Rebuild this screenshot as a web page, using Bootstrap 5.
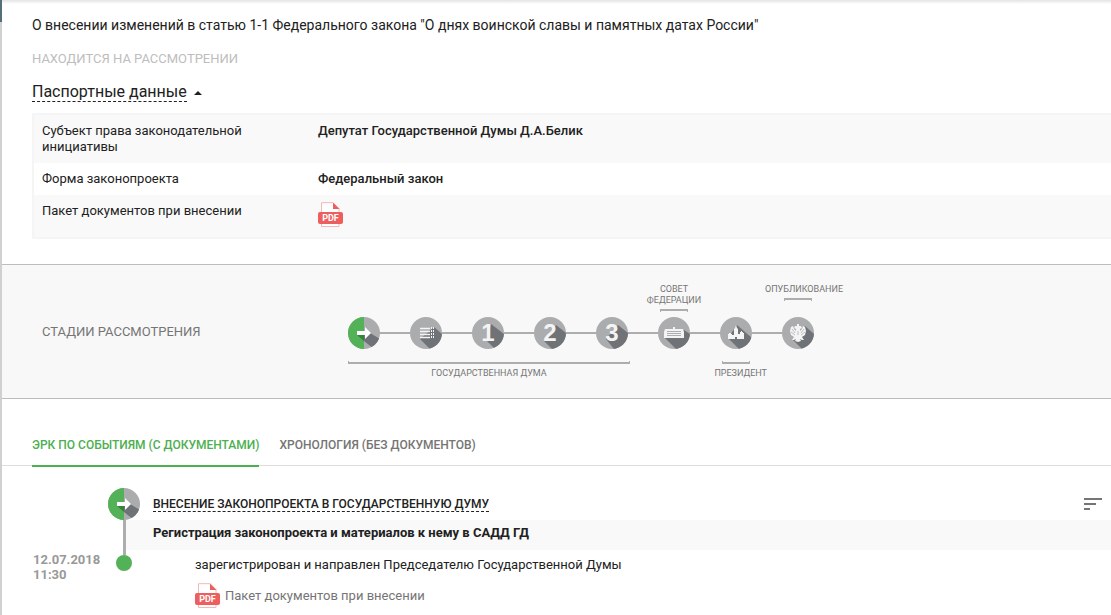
<!DOCTYPE html>
<html lang="ru">
<head>
<meta charset="utf-8">
<meta name="viewport" content="width=device-width, initial-scale=1">
<title>Законопроект</title>
<link href="https://cdn.jsdelivr.net/npm/bootstrap@5.3.0/dist/css/bootstrap.min.css" rel="stylesheet">
<style>
body{font-family:Roboto,"Liberation Sans",sans-serif;font-size:13px;line-height:16px;color:#212121;background:#fff;overflow-x:hidden}
a{color:inherit;text-decoration:none}
.side-rail{width:2px;background:linear-gradient(#546e7a 22px,#d0d0d0 22px)}
.top-shade{height:4px;background:linear-gradient(#e4e4e4,#fff)}
.page-main{min-width:0}
.bill-head{padding:12px 0 25px 30px}
.bill-title{font-size:14px;line-height:18px;font-weight:400;margin:0 0 17px}
.bill-status{color:#bdbdbd;line-height:16px;margin:0 0 16px}
.passport-toggle{font-size:16px;line-height:18px;gap:7px;color:#212121;margin-bottom:11px}
.dashed{border-bottom:1px dashed #212121}
.caret-up{border:4px solid transparent;border-top:0;border-bottom-color:#212121}
.passport{border:2px solid #f5f5f5;border-right:0;border-radius:2px 0 0 2px}
.passport table{margin:0;width:100%}
.passport th,.passport td{padding:8px;vertical-align:top}
.passport th{width:276px;font-weight:400;padding-right:60px}
.passport td{font-weight:500}
.passport tr:nth-child(odd){background:#f9f9f9}
.passport td.file-cell{padding:7px 8px 10px}
.passport td svg,.doc-link svg{display:block}
.stages{background:#f8f8f8;border-top:1px solid #bdbdbd;border-bottom:1px solid #bdbdbd;padding:19px 0 19px 40px}
.stages-title{width:291px;color:#757575;font-size:13px;font-weight:400;margin:0}
.stage-grid{display:grid;grid-template-columns:repeat(8,62px) 14px;grid-template-rows:28px auto auto;row-gap:5px;font-size:9px;line-height:11px;color:#757575;text-align:center}
.stage-dot{grid-row:2;display:flex;align-items:center;height:32px}
.stage-dot::before,.stage-dot::after{content:"";flex:1;height:2px;background:#adadad}
.stage-dot:nth-child(1)::before,.stage-dot:nth-child(8)::after{background:none}
.up,.down{display:flex;flex-direction:column;white-space:nowrap;gap:3px}
.up{grid-row:1}
.down{grid-row:3;padding-top:7px;gap:4px}
.s6{grid-column:6}.s7{grid-column:7}.s8{grid-column:8/10}.s15{grid-column:1/6;padding-left:15px;padding-right:13px}
.clamp{height:3px;border:1px solid #adadad}
.up .clamp{border-top-width:2px;border-bottom:0}
.down .clamp{border-bottom-width:2px;border-top:0}
.short{width:28px;margin-left:17px}
.event-tabs{padding:26px 0 0 30px;gap:20px;border-bottom:1px solid #dedede}
.event-tabs button{font-size:12px;border:0;background:none;padding:12px 0 12px;font-weight:500;color:#757575;border-bottom:2px solid transparent;margin-bottom:-2px}
.event-tabs button.active{color:#4caf50;border-color:#4caf50}
.timeline{display:grid;grid-template-columns:75px 32px minmax(0,1fr);grid-template-rows:32px 30px auto;padding:22px 0 0 31px}
.rail{grid-column:2;grid-row:1/4;display:flex;flex-direction:column;align-items:center;z-index:1}
.rail-line{width:3px;height:35px;background:#adadad}
.rail-dot{width:16px;height:16px;border-radius:50%;background:#53b257}
.ev-head{grid-column:3;grid-row:1;padding:0 9px 0 13px}
.ev-name{grid-column:2/4;grid-row:2;margin-left:16px;background:#f9f9f9;padding:5px 13px 9px 29px;font-weight:700}
.ev-date{grid-column:1;grid-row:3;color:#999;font-weight:700;line-height:15px;padding-top:2px}
.ev-body{grid-column:3;grid-row:3;padding:7px 0 8px 55px}
.ev-caption{font-size:12px;font-weight:500;line-height:14px;margin:0}
.doc-link{color:#757575;gap:5px;margin-top:10px}
</style>
</head>
<body>
<svg width="0" height="0" class="position-absolute" aria-hidden="true">
<defs>
<clipPath id="disc"><circle cx="16" cy="16" r="16"/></clipPath>
<symbol id="pdf" viewBox="0 0 25 25"><path d="M3.500 24.500V.7H15l6 6V24.500z" fill="#fff" stroke="#f4b8b6"/><path d="M15 .5 21.500 7H15z" fill="#ed5e5e"/><rect y="10" width="25" height="12" rx="2" fill="#ed5e5e"/><text x="12.500" y="19" text-anchor="middle" font-family="Roboto,sans-serif" font-weight="700" font-size="9" fill="#fff">PDF</text></symbol>
<symbol id="enter" viewBox="0 0 32 32"><g clip-path="url(#disc)"><path d="M0 0h32v32H0z" fill="#abacae"/><path d="M0 0h16v32H0z" fill="#53b257"/><path d="M9 18h7v6z" fill="#39813d"/><path d="M16 18l6-2 10 6v10h-6l-10-8z" fill="#6f7277"/><path d="M9 14h8v-4l6 6-6 6v-4H9z" fill="#fff"/></g></symbol>
</defs>
</svg>
<div class="d-flex min-vh-100">
<div class="side-rail flex-shrink-0"></div>
<main class="page-main flex-grow-1">
<div class="top-shade"></div>
<section class="bill-head">
<h1 class="bill-title">О внесении изменений в статью 1-1 Федерального закона "О днях воинской славы и памятных датах России"</h1>
<p class="bill-status">НАХОДИТСЯ НА РАССМОТРЕНИИ</p>
<button type="button" class="passport-toggle d-flex align-items-center border-0 bg-transparent p-0" aria-expanded="true"><span class="dashed">Паспортные данные</span><span class="caret-up"></span></button>
<div class="passport"><table>
<tbody>
<tr><th scope="row">Субъект права законодательной инициативы</th><td>Депутат Государственной Думы Д.А.Белик</td></tr>
<tr><th scope="row">Форма законопроекта</th><td>Федеральный закон</td></tr>
<tr><th scope="row">Пакет документов при внесении</th><td class="file-cell"><a href="#" aria-label="PDF"><svg width="25" height="25"><use href="#pdf"/></svg></a></td></tr>
</tbody></table></div>
</section>
<section class="stages d-flex align-items-center">
<h2 class="stages-title flex-shrink-0">СТАДИИ РАССМОТРЕНИЯ</h2>
<div class="stage-grid">
<div class="stage-dot"><svg width="32" height="32"><use href="#enter"/></svg></div>
<div class="stage-dot"><svg width="32" height="32" viewBox="0 0 32 32"><g clip-path="url(#disc)"><path d="M0 0h32v32H0z" fill="#abacae"/><path d="M24 10l8 7v15H20L10 22z" fill="#6f7277"/><path d="M10 11.500h10M10 14.500h10M10 17.500h10M10 20.500h10" stroke="#f4f4f4" stroke-width="1.600"/><path d="M21.500 10v12M23.500 10v12" stroke="#f4f4f4" stroke-dasharray="2 1"/></g></svg></div>
<div class="stage-dot"><svg width="32" height="32" viewBox="0 0 32 32"><g clip-path="url(#disc)"><path d="M0 0h32v32H0z" fill="#abacae"/><path d="M19 7l13 10v15h-9l-8-8z" fill="#6f7277"/><text x="16" y="24" text-anchor="middle" font-family="Liberation Sans,sans-serif" font-weight="700" font-size="24" fill="#f4f4f4">1</text></g></svg></div>
<div class="stage-dot"><svg width="32" height="32" viewBox="0 0 32 32"><g clip-path="url(#disc)"><path d="M0 0h32v32H0z" fill="#abacae"/><path d="M22 8l10 8v16H18l-8-8z" fill="#6f7277"/><text x="16" y="24" text-anchor="middle" font-family="Liberation Sans,sans-serif" font-weight="700" font-size="24" fill="#f4f4f4">2</text></g></svg></div>
<div class="stage-dot"><svg width="32" height="32" viewBox="0 0 32 32"><g clip-path="url(#disc)"><path d="M0 0h32v32H0z" fill="#abacae"/><path d="M22 8l10 8v16H18l-8-10z" fill="#6f7277"/><text x="16" y="24" text-anchor="middle" font-family="Liberation Sans,sans-serif" font-weight="700" font-size="24" fill="#f4f4f4">3</text></g></svg></div>
<div class="stage-dot"><svg width="32" height="32" viewBox="0 0 32 32"><g clip-path="url(#disc)"><path d="M0 0h32v32H0z" fill="#abacae"/><path d="M26 13l6 4v15H18L7 21z" fill="#6f7277"/><path d="M7 12h8v-2h2v2h8l1 3v6H6v-6z" fill="#f4f4f4"/><path d="M9 14.500h14M9 16.500h14M9 18.500h14" stroke="#999ba0" stroke-width=".8"/></g></svg></div>
<div class="stage-dot"><svg width="32" height="32" viewBox="0 0 32 32"><g clip-path="url(#disc)"><path d="M0 0h32v32H0z" fill="#abacae"/><path d="M17 8l15 13v11H19L8 21z" fill="#6f7277"/><path d="M8 22v-5h1v-1h2v1h1v1h2v-6l1-1 1-3 1 3 1 1v5h2v-2h1v-1h1v1h1v1h1v6h-7v-2h-2v2z" fill="#f4f4f4"/></g></svg></div>
<div class="stage-dot"><svg width="32" height="32" viewBox="0 0 32 32"><g clip-path="url(#disc)"><path d="M0 0h32v32H0z" fill="#abacae"/><path d="M23 9l9 8v15H20l-9-9z" fill="#6f7277"/><path d="M15 7h2v2h2l1 2-2 1v2l2-2 1-3 2 1 1 4-1 4-3 2 2 3h-2l-2-1 1 2-3 1-3-1 1-2-2 1h-2l2-3-3-2-1-4 1-4 2-1 1 3 2 2v-2l-2-1 1-2h2z" fill="#f4f4f4"/><path d="M10 12l3 4M22 12l-3 4M9 15l4 3M23 15l-4 3M16 14v4" stroke="#999ba0" stroke-width=".6"/></g></svg></div>
<div class="up s6"><span>СОВЕТ<br>ФЕДЕРАЦИИ</span><span class="clamp short"></span></div>
<div class="up s8"><span class="d-flex justify-content-end">ОПУБЛИКОВАНИЕ</span><span class="clamp short"></span></div>
<div class="down s15"><span class="clamp"></span><span>ГОСУДАРСТВЕННАЯ ДУМА</span></div>
<div class="down s7"><span class="clamp short"></span><span class="d-flex justify-content-end">ПРЕЗИДЕНТ</span></div>
</div>
</section>
<div class="event-tabs d-flex" role="tablist"><button type="button" role="tab" class="active" aria-selected="true">ЭРК ПО СОБЫТИЯМ (С ДОКУМЕНТАМИ)</button><button type="button" role="tab" aria-selected="false">ХРОНОЛОГИЯ (БЕЗ ДОКУМЕНТОВ)</button></div>
<section class="timeline">
<div class="rail"><svg class="flex-shrink-0" width="32" height="32"><use href="#enter"/></svg><span class="rail-line"></span><span class="rail-dot"></span></div>
<div class="ev-head d-flex align-items-center justify-content-between"><h3 class="ev-caption"><a href="#" class="dashed">ВНЕСЕНИЕ ЗАКОНОПРОЕКТА В ГОСУДАРСТВЕННУЮ ДУМУ</a></h3><button type="button" class="border-0 bg-transparent p-0 d-flex" aria-label="Сортировка"><svg width="18" height="12" viewBox="0 0 18 12"><path d="M0 1h18M0 6h12M0 11h6" stroke="#757575" stroke-width="2"/></svg></button></div>
<div class="ev-name">Регистрация законопроекта и материалов к нему в САДД ГД</div>
<div class="ev-date">12.07.2018<br>11:30</div>
<div class="ev-body"><div>зарегистрирован и направлен Председателю Государственной Думы</div><a href="#" class="doc-link d-inline-flex align-items-center"><svg width="25" height="25"><use href="#pdf"/></svg>Пакет документов при внесении</a></div>
</section>
</main>
</div>
<script src="https://cdn.jsdelivr.net/npm/bootstrap@5.3.0/dist/js/bootstrap.bundle.min.js"></script>
</body>
</html>
